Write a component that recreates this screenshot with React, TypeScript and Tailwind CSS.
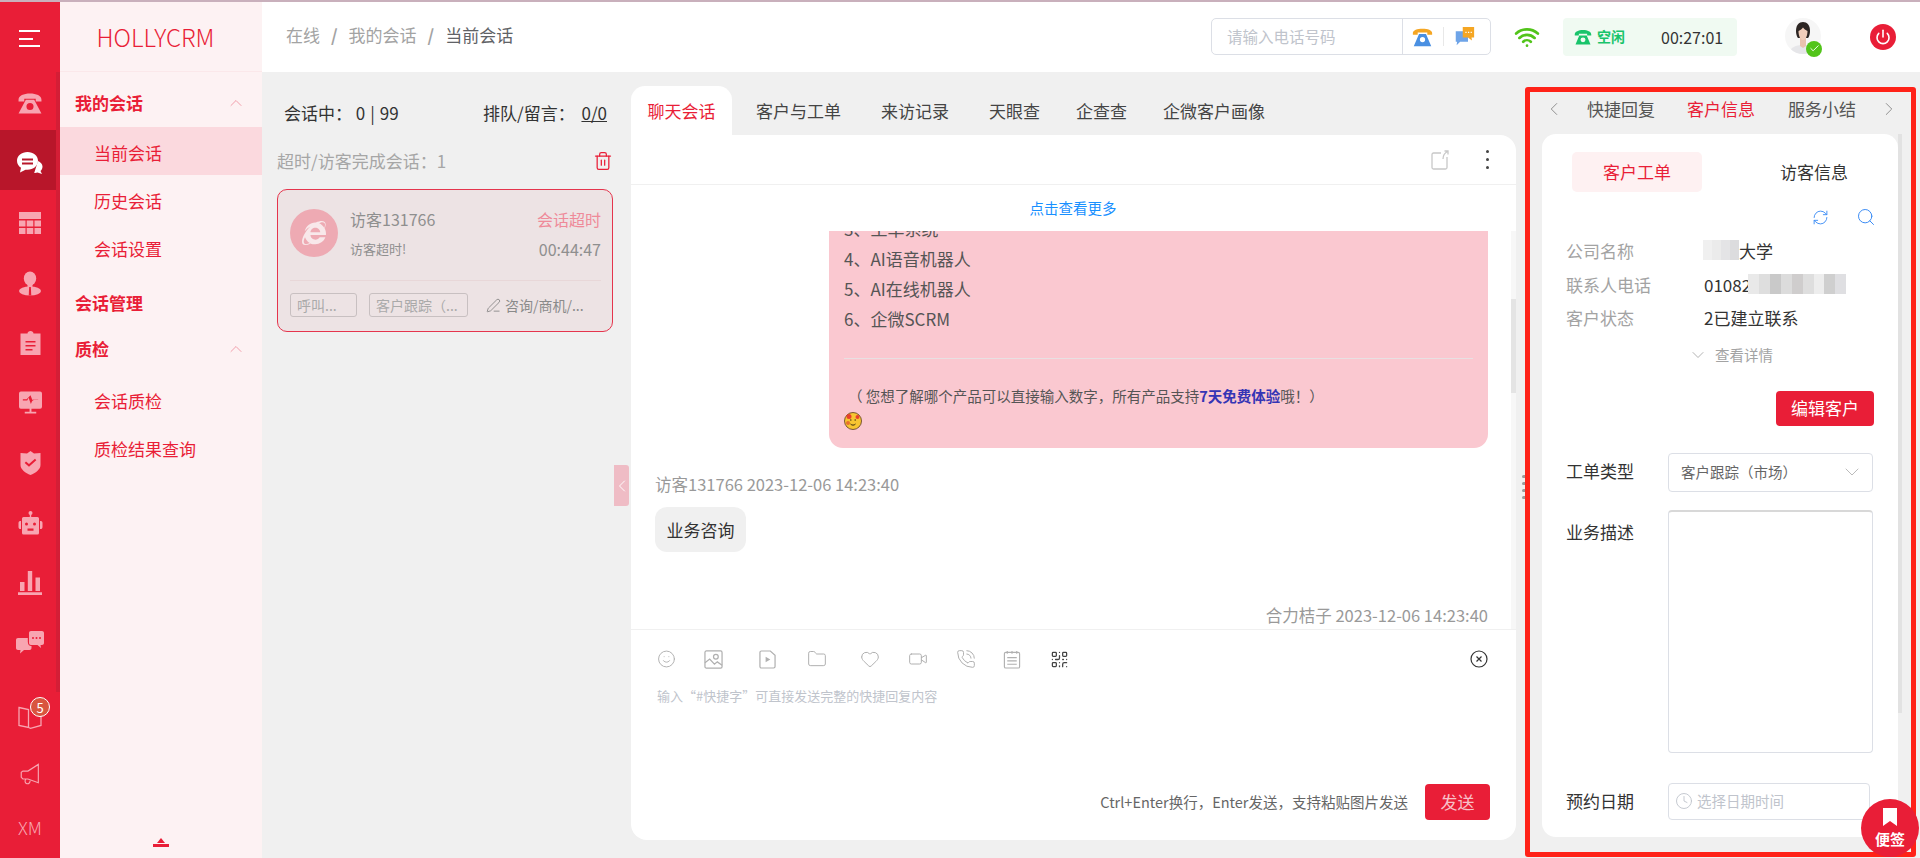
import {
  ChevronDown,
  ChevronLeft,
  ChevronRight,
  ChevronUp,
  Clock,
  Folder,
  Heart,
  PenLine,
  PhoneCall,
  QrCode,
  RefreshCw,
  Search,
  Smile,
  Trash2,
  Video,
  Wifi,
  Power,
  Check,
} from "lucide-react";
import { FaInternetExplorer } from "react-icons/fa";

const RotaryPhone = ({ className }: { className?: string }) => (
  <svg viewBox="0 0 24 24" className={className} fill="currentColor">
    <path d="M1 8.500C1 4.500 6 2.500 12 2.500s11 2 11 6v1.500h-5.500V7.500h-11V10H1z" />
    <path
      fillRule="evenodd"
      d="M8 8.500h8l7 13H1zM12 11.500a3.400 3.400 0 1 0 0 6.800 3.400 3.400 0 0 0 0-6.800z"
    />
  </svg>
);

const ChatActive = ({ className }: { className?: string }) => (
  <svg viewBox="0 0 28 24" className={className} fill="currentColor">
    <path d="M22 10c2.500 1 4.500 3 4.500 5.500 0 2-1 3.500-2 4.500l1.500 3-4.500-1.500c-1 .4-2.200.5-3.300.4z" />
    <path
      fillRule="evenodd"
      d="M11.500 1C5.700 1 1 4.800 1 9.800c0 3 1.600 5.400 4 7L4 21.500l5.500-2.800c.6.1 1.300.1 2 .1 5.800 0 10.500-4 10.500-9S17.300 1 11.500 1zM6 7.500h11v2H6zM6 11.500h11v2H6z"
    />
  </svg>
);

const GridIcon = ({ className }: { className?: string }) => (
  <svg viewBox="0 0 22 22" className={className} fill="currentColor">
    <path d="M0 0h22v7H0zM0 8.500h6.500v6H0zM7.700 8.500h6.600v6H7.700zM15.500 8.500H22v6h-6.500zM0 16h6.500v6H0zM7.700 16h6.600v6H7.700zM15.500 16H22v6h-6.500z" />
  </svg>
);

const PersonIcon = ({ className }: { className?: string }) => (
  <svg viewBox="0 0 22 24" className={className} fill="currentColor">
    <ellipse cx="11" cy="7" rx="6.200" ry="7" />
    <path d="M8.500 12h5v4h-5z" />
    <ellipse cx="11" cy="19.500" rx="11" ry="4.500" />
    <path d="M10.200 15.500h1.600l.5 8.500h-2.600z" fill="#e91e37" />
  </svg>
);

const ClipboardIcon = ({ className }: { className?: string }) => (
  <svg viewBox="0 0 20 24" className={className} fill="currentColor">
    <path
      fillRule="evenodd"
      d="M7 2.500C7 1 8.300 0 10 0s3 1 3 2.500h7V24H0V2.500zM5 10v1.500h10V10zM5 14v1.500h10V14zM5 18v1.500h7V18z"
    />
  </svg>
);

const MonitorIcon = ({ className }: { className?: string }) => (
  <svg viewBox="0 0 24 24" className={className} fill="currentColor">
    <path
      fillRule="evenodd"
      d="M2 0h20a2 2 0 0 1 2 2v14a2 2 0 0 1-2 2h-9v3h5v2H6v-2h5v-3H2a2 2 0 0 1-2-2V2a2 2 0 0 1 2-2zM4 8v1.400h4.600l1.400-3 2.400 6.600 2-4.600h5.600V8h-4.600l-1 2.200-2.400-6.400L8 8z"
    />
  </svg>
);

const ShieldIcon = ({ className }: { className?: string }) => (
  <svg viewBox="0 0 20 24" className={className} fill="currentColor">
    <path
      fillRule="evenodd"
      d="M10 0l3.500 2.500L20 2v12c0 4.500-5 8-10 10C5 22 0 18.500 0 14V2l6.500.5zM5.500 10.500L4.200 12l4.300 3.800 7.300-6.600-1.300-1.400-6 5.300z"
    />
  </svg>
);

const RobotIcon = ({ className }: { className?: string }) => (
  <svg viewBox="0 0 24 24" className={className} fill="currentColor">
    <circle cx="12" cy="2" r="2" />
    <path d="M11.300 3h1.400v4h-1.400z" />
    <path
      fillRule="evenodd"
      d="M5 6h14a1.500 1.500 0 0 1 1.500 1.500V22a1.500 1.500 0 0 1-1.500 1.500H5A1.500 1.500 0 0 1 3.500 22V7.500A1.500 1.500 0 0 1 5 6zM8 11.500a1.500 1.500 0 1 0 0 3 1.500 1.500 0 0 0 0-3zm8 0a1.500 1.500 0 1 0 0 3 1.500 1.500 0 0 0 0-3zM9 17.500v2.200h6v-2.200z"
    />
    <path d="M0 12a2 2 0 0 1 2.500-2v8A2 2 0 0 1 0 16zM24 12a2 2 0 0 0-2.500-2v8a2 2 0 0 0 2.500-2z" />
  </svg>
);

const BarsIcon = ({ className }: { className?: string }) => (
  <svg viewBox="0 0 24 24" className={className} fill="currentColor">
    <path d="M2 11h4.500v9H2zM9.800 0h4.400v20H9.800zM17.500 6.500H22V20h-4.500zM0 21.300h24V24H0z" />
  </svg>
);

const ChatsIcon = ({ className }: { className?: string }) => (
  <svg viewBox="0 0 28 24" className={className} fill="currentColor">
    <path d="M2 7h9.800v3.500c0 3 1.300 4.500 3.700 4.500v2c0 1-.8 2-2 2H8l-4 3.500.5-3.500H2c-1.200 0-2-1-2-2V9c0-1.200.8-2 2-2z" />
    <path
      fillRule="evenodd"
      d="M15 0h11c1.100 0 2 .8 2 2v10c0 1.200-.9 2-2 2h-1.500l.5 3-3.500-3H15c-1.200 0-2-.8-2-2V2c0-1.200.8-2 2-2zm2 6a1 1 0 1 0 0 2 1 1 0 0 0 0-2zm3.500 0a1 1 0 1 0 0 2 1 1 0 0 0 0-2zM24 6a1 1 0 1 0 0 2 1 1 0 0 0 0-2z"
    />
  </svg>
);

const BookIcon = ({ className }: { className?: string }) => (
  <svg viewBox="0 0 24 24" className={className} fill="none" stroke="currentColor" strokeWidth="1.300">
    <path d="M1 2.500l9.500 2v18L1 20.500zM10.500 4.500v18M10.500 22.500l2 .8 10.500-2.800V6" />
  </svg>
);

const MegaphoneIcon = ({ className }: { className?: string }) => (
  <svg viewBox="0 0 24 26" className={className} fill="none" stroke="currentColor" strokeWidth="1.400">
    <path d="M22 1.500v22L9.500 19H3.500L1.500 17v-6l2-1.500h6zM7 19.500a3 3 0 1 0 5 1.500" />
  </svg>
);

const LinkShare = () => (
  <svg viewBox="0 0 18 20" className="h-[20px] w-[18px]" fill="none" stroke="#c8c8c8" strokeWidth="1.300">
    <path d="M10 3H2.500A1.500 1.500 0 0 0 1 4.500v13A1.500 1.500 0 0 0 2.500 19h12a1.500 1.500 0 0 0 1.500-1.500V7M12 9c0-3 1.500-6 4.500-7.500M13.500 1h3.500v3.500" />
  </svg>
);

const ImageOutline = () => (
  <svg viewBox="0 0 20 20" className="h-[19px] w-[19px]" fill="none" stroke="#b0b0b0" strokeWidth="1.300">
    <rect x="1" y="1" width="18" height="18" rx="1.500" />
    <circle cx="12.500" cy="7" r="2.500" />
    <path d="M1 13.500l5-4 5 5.500 3-2.500 5 3.500" />
  </svg>
);

const FilePlay = () => (
  <svg viewBox="0 0 18 20" className="h-[19px] w-[17px]" fill="none" stroke="#b0b0b0" strokeWidth="1.300">
    <path d="M2.500 1H12l5 4.500v12a1.500 1.500 0 0 1-1.500 1.500h-13A1.500 1.500 0 0 1 1 17.500v-15A1.500 1.500 0 0 1 2.500 1z" />
    <path d="M7 7l5 3-5 3z" fill="#b0b0b0" stroke="none" />
  </svg>
);

const Notepad = () => (
  <svg viewBox="0 0 18 20" className="h-[19px] w-[18px]" fill="none" stroke="#b0b0b0" strokeWidth="1.200">
    <rect x="1" y="2.500" width="16" height="16.500" rx="1.500" />
    <path d="M4 1v3M9 1v3M14 1v3M4 8h10M4 11.500h10M4 15h10" />
  </svg>
);

const Emoji = () => (
  <svg viewBox="0 0 18 18" className="h-[18px] w-[18px]">
    <circle cx="9" cy="9" r="8.500" fill="#f7c531" stroke="#5a3a1a" strokeWidth="0.800" />
    <circle cx="5" cy="4.500" r="2.500" fill="#e8402c" />
    <circle cx="13.500" cy="5" r="2" fill="#e8402c" />
    <circle cx="4" cy="11" r="2" fill="#e8702c" />
    <path d="M6 8h1.500M10.500 8H12" stroke="#3a2a10" strokeWidth="1" />
    <path d="M6.500 12c1.500 1.500 3.500 1.500 5 0" stroke="#3a2a10" strokeWidth="1" fill="none" />
  </svg>
);

const DeskPhone = () => (
  <svg viewBox="0 0 24 24" className="h-[21px] w-[21px]">
    <path d="M1 8C1 4.500 6 3 12 3s11 1.500 11 5v2h-5.500V7.500h-11V10H1z" fill="#f5a623" />
    <path
      fillRule="evenodd"
      d="M8 9h8l6 14H2zM12 12.500a3 3 0 1 0 0 6 3 3 0 0 0 0-6z"
      fill="#4a90e2"
    />
  </svg>
);

const CallMessage = () => (
  <svg viewBox="0 0 24 24" className="h-[21px] w-[21px]">
    <path d="M2 6h14v12H7l-4 4 .5-4H2z" fill="#6ea4e8" />
    <path d="M10 1h13v12h-3l.5 3.500L16 13h-6z" fill="#f5a623" />
    <path d="M13 6.500h1.400V8H13zM16 6.500h1.400V8H16zM19 6.500h1.400V8H19z" fill="#fff" />
  </svg>
);

const Avatar = () => (
  <svg viewBox="0 0 36 36" className="h-[36px] w-[36px]">
    <clipPath id="face">
      <circle cx="18" cy="18" r="18" />
    </clipPath>
    <g clipPath="url(#face)">
      <rect width="36" height="36" fill="#f6f6f6" />
      <path d="M4 36c1-7 7-9 14-9s13 2 14 9z" fill="#e6e6e9" />
      <path d="M15 20h6v8l-3 2-3-2z" fill="#e9c2ae" />
      <path d="M11 13c0-6 3-9 7-9s7 3 7 9c0 3-1 6-2 7H13c-1-1-2-4-2-7z" fill="#2c2523" />
      <path d="M13.500 13c2-1 3.500-2 4.500-3.500 1 1.500 2.500 2.500 4.500 3.500 0 5-2 9-4.500 9s-4.500-4-4.500-9z" fill="#f0cdba" />
    </g>
  </svg>
);

const railIcons = [
  { Icon: RotaryPhone, size: "h-[25px] w-[26px]" },
  { Icon: ChatActive, size: "h-[24px] w-[28px]", active: true },
  { Icon: GridIcon, size: "h-[22px] w-[22px]" },
  { Icon: PersonIcon, size: "h-[25px] w-[22px]" },
  { Icon: ClipboardIcon, size: "h-[24px] w-[21px]" },
  { Icon: MonitorIcon, size: "h-[24px] w-[23px]" },
  { Icon: ShieldIcon, size: "h-[24px] w-[21px]" },
  { Icon: RobotIcon, size: "h-[24px] w-[27px]" },
  { Icon: BarsIcon, size: "h-[24px] w-[24px]" },
  { Icon: ChatsIcon, size: "h-[24px] w-[28px]" },
];

const Rail = () => (
  <div className="relative flex h-full w-[60px] shrink-0 flex-col bg-[#e91e37]">
    <div className="flex h-[68px] w-[56px] flex-col justify-center gap-[5.500px] pl-[19px] pt-[5px]">
      <div className="h-[2px] w-[21px] bg-white" />
      <div className="h-[2px] w-[14px] bg-white" />
      <div className="h-[2px] w-[21px] bg-white" />
    </div>
    {railIcons.map(({ Icon, size, active }, i) => (
      <div
        key={i}
        className={
          active
            ? "flex h-[60px] w-[56px] items-center justify-center bg-[#b8162a] pl-[4px] pt-[6px] text-white"
            : "flex h-[60px] w-[56px] items-center justify-center pl-[4px] pt-[6px] text-[#f8a5b1]"
        }
      >
        <Icon className={size} />
      </div>
    ))}
    <div className="relative ml-[18px] mt-[35px] h-[24px] w-[24px] text-[#f8a5b1]">
      <BookIcon className="h-[24px] w-[24px]" />
      <span className="absolute -right-[8px] -top-[8px] flex h-[20px] w-[20px] items-center justify-center rounded-full border border-white bg-[#d9553f] text-[13px] leading-none text-white">
        5
      </span>
    </div>
    <div className="mt-[34px] flex h-[22px] w-[60px] items-center justify-center text-[#f8a5b1]">
      <MegaphoneIcon className="h-[22px] w-[20px]" />
    </div>
    <div className="mt-[30px] w-[60px] text-center text-[18px] font-light leading-[24px] text-[#f8a5b1]">XM</div>
    <div className="absolute left-[56px] top-[70px] h-[620px] w-[4px] bg-[#d41e36]" />
  </div>
);

const SideItem = ({ label, active }: { label: string; active?: boolean }) => (
  <div
    className={
      active
        ? "flex h-[48px] items-center bg-[#fbd9de] pl-[34px] pt-[4px] text-[17px] text-[#e91e37]"
        : "flex h-[48px] items-center pl-[34px] pt-[4px] text-[17px] text-[#e91e37]"
    }
  >
    {label}
  </div>
);

const SideGroup = ({ label, caret }: { label: string; caret?: boolean }) => (
  <div className="flex h-[46px] items-center justify-between pb-[3px] pl-[15px] pr-[16px] text-[17px] font-bold text-[#e91e37]">
    <span>{label}</span>
    {caret && <ChevronUp size={20} strokeWidth={1} className="text-[#ef8e9c]" />}
  </div>
);

const Sidebar = () => (
  <div className="flex h-full w-[202px] shrink-0 flex-col bg-[#fdf2f3]">
    <div className="flex h-[70px] items-center justify-center border-b border-[#fbe8ea] pr-[11px] text-[24px] font-light text-[#e91e37]">
      HOLLYCRM
    </div>
    <div className="pt-[9px]">
      <SideGroup label="我的会话" caret />
      <SideItem label="当前会话" active />
      <SideItem label="历史会话" />
      <SideItem label="会话设置" />
      <div className="h-[10px]" />
      <SideGroup label="会话管理" />
      <SideGroup label="质检" caret />
      <div className="h-[2px]" />
      <SideItem label="会话质检" />
      <SideItem label="质检结果查询" />
    </div>
    <div className="mt-auto flex flex-col items-center pb-[11px]">
      <div className="h-0 w-0 border-x-[4px] border-b-[5px] border-x-transparent border-b-[#e91e37]" />
      <div className="mt-[1px] h-[3px] w-[16px] bg-[#e91e37]" />
    </div>
  </div>
);

const Header = () => (
  <div className="flex h-[70px] shrink-0 items-center bg-white pb-[1px]">
    <div className="flex items-center pb-[4px] pl-[24px] text-[17px] text-[#a3a3a3]">
      <span>在线</span>
      <span className="mx-[11px] font-bold">/</span>
      <span>我的会话</span>
      <span className="mx-[11px] font-bold">/</span>
      <span className="text-[#606266]">当前会话</span>
    </div>
    <div className="ml-auto flex h-[37px] w-[280px] rounded-[5px] border border-[#dcdfe6]">
      <div className="flex w-[191px] items-center border-r border-[#dcdfe6] pl-[15px] text-[15.500px] text-[#c0c4cc]">
        请输入电话号码
      </div>
      <div className="flex flex-1 items-center justify-start gap-[10px] pl-[9px]">
        <DeskPhone />
        <div className="h-[19px] w-px bg-[#e8e8e8]" />
        <CallMessage />
      </div>
    </div>
    <Wifi size={26} strokeWidth={2.500} className="ml-[23px] text-[#52c41a]" />
    <div className="ml-[23px] flex h-[38px] w-[174px] items-center rounded-[4px] bg-[#f0faf2] pl-[11px]">
      <svg viewBox="0 0 24 24" className="h-[18px] w-[18px] text-[#19c46b]" fill="currentColor">
        <path d="M1 8.500C1 4.500 6 2.500 12 2.500s11 2 11 6v1.500h-5.500V7.500h-11V10H1z" />
        <path fillRule="evenodd" d="M7 10h10l5 12H2zM12 12.500a3.300 3.300 0 1 0 0 6.600 3.300 3.300 0 0 0 0-6.600z" />
      </svg>
      <span className="ml-[5px] text-[14px] font-bold text-[#19c46b]">空闲</span>
      <span className="ml-[36px] text-[16px] text-[#333]">00:27:01</span>
    </div>
    <div className="relative ml-[48px] h-[36px] w-[36px] -translate-y-[1px]">
      <Avatar />
      <div className="absolute -bottom-[3px] -right-[1px] flex h-[16px] w-[16px] items-center justify-center rounded-full bg-[#52c41a]">
        <Check size={11} strokeWidth={2} className="text-white" />
      </div>
    </div>
    <div className="ml-[49px] mr-[24px] flex h-[26px] w-[26px] items-center justify-center rounded-full bg-[#e91e37]">
      <Power size={16} strokeWidth={2.400} className="text-white" />
    </div>
  </div>
);

const ConversationList = () => (
  <div className="relative w-[369px] shrink-0 pl-[15px] pr-[18px]">
    <div className="mt-[29px] flex h-[24px] items-center justify-between pl-[7px] pr-[6px] text-[17px] text-[#333]">
      <span>
        会话中：&nbsp;0<span className="mx-[5px]">|</span>99
      </span>
      <span>
        排队/留言：&nbsp;<span className="ml-[3px] underline">0/0</span>
      </span>
    </div>
    <div className="mt-[24px] flex h-[24px] items-center justify-between text-[17px] text-[#a6a6a6]">
      <span>超时/访客完成会话：1</span>
      <Trash2 size={20} strokeWidth={1.500} className="text-[#e91e37]" />
    </div>
    <div className="mt-[16px] h-[143px] w-[336px] rounded-[10px] border border-[#e5354d] bg-[#ede3e4] pl-[12px] pr-[11px]">
      <div className="flex h-[91px] items-center border-b border-[#e8d7d8]">
        <div className="mb-[5px] flex h-[48px] w-[48px] shrink-0 items-center justify-center rounded-full bg-[#eeaab3]">
          <FaInternetExplorer size={24} className="text-[#f8e8ea]" />
        </div>
        <div className="mb-[2px] ml-[12px] flex-1">
          <div className="flex items-center justify-between text-[16px]">
            <span className="text-[#8f8f8f]">访客131766</span>
            <span className="text-[#ef8a99]">会话超时</span>
          </div>
          <div className="mt-[6px] flex items-center justify-between">
            <span className="text-[13px] text-[#8f8f8f]">访客超时!</span>
            <span className="text-[16px] text-[#8f8f8f]">00:44:47</span>
          </div>
        </div>
      </div>
      <div className="flex items-center pt-[12px] text-[14px]">
        <div className="flex h-[24px] w-[67px] items-center rounded-[3px] border border-[#c8c0c1] pl-[6px] text-[#aaa]">
          呼叫...
        </div>
        <div className="ml-[12px] flex h-[24px] w-[99px] items-center rounded-[3px] border border-[#c8c0c1] pl-[6px] text-[#aaa]">
          客户跟踪（...
        </div>
        <PenLine size={15} strokeWidth={1.200} className="ml-[18px] text-[#777]" />
        <span className="ml-[4px] text-[#8a8a8a]">咨询/商机/...</span>
      </div>
    </div>
    <div className="absolute right-[2px] top-[393px] flex h-[41px] w-[15px] items-center justify-center rounded-r-[3px] bg-[#efbcc5]">
      <ChevronLeft size={20} strokeWidth={1.100} className="shrink-0 text-white" />
    </div>
  </div>
);

const chatTabs = ["客户与工单", "来访记录", "天眼查", "企查查", "企微客户画像"];

const ChatPanel = () => (
  <div className="flex w-[885px] shrink-0 flex-col">
    <div className="mt-[14px] flex h-[49px] text-[17px] text-[#444]">
      <div className="flex h-[49px] w-[101px] items-center justify-center rounded-t-[14px] bg-white text-[#e91e37]">
        聊天会话
      </div>
      <div className="ml-[24px] flex items-center gap-[40px]">
        {chatTabs.map((t, i) => (
          <span key={t} className={i > 1 ? "-mr-[4px]" : ""}>
            {t}
          </span>
        ))}
      </div>
    </div>
    <div className="flex h-[705px] flex-col rounded-b-[16px] rounded-tr-[16px] bg-white">
      <div className="flex h-[50px] shrink-0 items-center justify-end gap-[37px] border-b border-[#f0f0f0] pr-[27px]">
        <LinkShare />
        <div className="flex flex-col gap-[5px]">
          <div className="h-[3px] w-[3px] rounded-full bg-[#444]" />
          <div className="h-[3px] w-[3px] rounded-full bg-[#444]" />
          <div className="h-[3px] w-[3px] rounded-full bg-[#444]" />
        </div>
      </div>
      <div className="flex h-[46px] shrink-0 items-center justify-center pr-[1px] text-[14.500px] text-[#1890ff]">
        点击查看更多
      </div>
      <div className="relative h-[399px] shrink-0 overflow-hidden border-b border-[#f0f0f0]">
        <div className="absolute right-0 top-0 h-[399px] w-[5px] bg-[#f7f7f7]">
          <div className="mt-[68px] h-[94px] w-[5px] bg-[#e4e4e4]" />
        </div>
        <div className="ml-[198px] mr-[28px] -mt-[17px] h-[234px] rounded-[14px] bg-[#fac8d0] px-[15px] text-[17px] leading-[30px] text-[#555]">
          <div>3、工单系统</div>
          <div>4、AI语音机器人</div>
          <div>5、AI在线机器人</div>
          <div>6、企微SCRM</div>
          <div className="mt-[24px] h-px bg-[#e8e0e2]" />
          <div className="mt-[25px] whitespace-nowrap pl-[4px] text-[14.500px] leading-[24px]">
            （ 您想了解哪个产品可以直接输入数字，所有产品支持
            <b className="text-[#3535b5]">7天免费体验</b>哦！）
          </div>
          <div className="mt-[4px]">
            <Emoji />
          </div>
        </div>
        <div className="ml-[24px] mt-[25px] text-[16.500px] leading-[22px] text-[#999]">访客131766 2023-12-06 14:23:40</div>
        <div className="ml-[24px] mt-[12px] flex h-[45px] w-[91px] items-center justify-center rounded-[12px] bg-[#f0f0f0] text-[17px] text-[#333]">
          业务咨询
        </div>
        <div className="mr-[28px] mt-[52px] text-right text-[16.500px] leading-[22px] text-[#999]">
          合力桔子 2023-12-06 14:23:40
        </div>
      </div>
      <div className="flex h-[58px] shrink-0 items-center pl-[26px] pr-[28px]">
        <div className="flex w-[19px] justify-center">
          <Smile size={20} strokeWidth={1.200} className="text-[#b0b0b0]" />
        </div>
        <div className="ml-[28px]">
          <ImageOutline />
        </div>
        <div className="ml-[36px]">
          <FilePlay />
        </div>
        <Folder size={20} strokeWidth={1.200} className="ml-[31px] text-[#b0b0b0]" />
        <Heart size={20} strokeWidth={1.200} className="ml-[33px] text-[#b0b0b0]" />
        <Video size={20} strokeWidth={1.200} className="ml-[28px] text-[#b0b0b0]" />
        <PhoneCall size={20} strokeWidth={1.200} className="ml-[28px] text-[#b0b0b0]" />
        <div className="ml-[27px]">
          <Notepad />
        </div>
        <QrCode size={19} strokeWidth={1.600} className="ml-[29px] text-[#444]" />
        <svg viewBox="0 0 18 18" className="ml-auto h-[18px] w-[18px]" fill="none" stroke="#333" strokeWidth="1.200">
          <circle cx="9" cy="9" r="8" />
          <path d="M6.500 6.500l5 5M11.500 6.500l-5 5" />
        </svg>
      </div>
      <div className="-mt-[2px] pl-[26px] text-[13px] leading-[20px] text-[#c0c4cc]">输入“#快捷字”可直接发送完整的快捷回复内容</div>
      <div className="mt-[78px] flex items-center justify-end pr-[26px]">
        <span className="text-[14.500px] text-[#666]">Ctrl+Enter换行，Enter发送，支持粘贴图片发送</span>
        <div className="ml-[17px] flex h-[36px] w-[65px] items-center justify-center rounded-[4px] bg-[#e91e37] text-[17px] text-[#f8c0c8]">
          发送
        </div>
      </div>
    </div>
  </div>
);

const mosaicA = ["bg-[#f0f0f0]", "bg-[#ebebeb]", "bg-[#e4e4e6]", "bg-[#dcdcde]"];
const mosaicB = [
  "bg-[#e9e9e9]",
  "bg-[#dedede]",
  "bg-[#c9c9c9]",
  "bg-[#dcdcdc]",
  "bg-[#cfcdcd]",
  "bg-[#dedede]",
  "bg-[#ededed]",
  "bg-[#cfcfcf]",
  "bg-[#dfdfe2]",
];

const Info = ({ label, children }: { label: string; children: React.ReactNode }) => (
  <div className="flex h-[33.500px] items-center pl-[24px] text-[17px]">
    <span className="w-[138px] text-[#a3a3a3]">{label}</span>
    <div className="flex items-center text-[#333]">{children}</div>
  </div>
);

const CustomerPanel = () => (
  <div className="relative flex-1">
    <div className="flex h-[62px] items-center pt-[12px] text-[17px] text-[#555]">
      <ChevronLeft size={22} strokeWidth={1} className="ml-[27px] text-[#888]" />
      <span className="ml-[22px]">快捷回复</span>
      <span className="ml-[32px] text-[#e91e37]">客户信息</span>
      <span className="ml-[33px]">服务小结</span>
      <ChevronRight size={22} strokeWidth={1} className="ml-[22px] text-[#888]" />
    </div>
    <div className="ml-[26px] flex">
      <div className="h-[703px] w-[356px] rounded-[14px] bg-white pt-[18px]">
        <div className="flex h-[40px] items-center pl-[30px] text-[17px]">
          <div className="flex h-[40px] w-[130px] items-center justify-center rounded-[5px] bg-[#fef1f2] text-[#e91e37]">
            客户工单
          </div>
          <span className="ml-[78px] text-[#333]">访客信息</span>
        </div>
        <div className="mt-[15px] flex h-[20px] items-center justify-end gap-[27px] pr-[22px] text-[#3b8cf5]">
          <RefreshCw size={17} strokeWidth={1.300} />
          <Search size={20} strokeWidth={1.200} />
        </div>
        <div className="mt-[7px]">
          <Info label="公司名称">
            <div className="-ml-px -mt-[2px] flex h-[20px] w-[36px]">
              {mosaicA.map((c) => (
                <div key={c} className={"h-full flex-1 " + c} />
              ))}
            </div>
            <span>大学</span>
          </Info>
          <Info label="联系人电话">
            <span>01082</span>
            <div className="-ml-[3px] flex h-[20px] w-[98px]">
              {mosaicB.map((c) => (
                <div key={c} className={"h-full flex-1 " + c} />
              ))}
            </div>
          </Info>
          <Info label="客户状态">
            <span>2已建立联系</span>
          </Info>
        </div>
        <div className="mt-[3px] flex h-[34px] items-center pl-[146px] text-[14.500px] text-[#a3a3a3]">
          <ChevronDown size={20} strokeWidth={1} />
          <span className="ml-[7px]">查看详情</span>
        </div>
        <div className="mt-[19px] flex justify-end pr-[24px]">
          <div className="flex h-[35px] w-[98px] items-center justify-center rounded-[4px] bg-[#e91e37] text-[17px] text-white">
            编辑客户
          </div>
        </div>
        <div className="mt-[27px] flex items-center pl-[24px]">
          <span className="w-[102px] pb-[2px] text-[17px] text-[#333]">工单类型</span>
          <div className="flex h-[39px] w-[205px] items-center justify-between rounded-[4px] border border-[#dcdfe6] pl-[12px] pr-[8px] text-[14.500px] text-[#666]">
            <span>客户跟踪（市场）</span>
            <ChevronDown size={24} strokeWidth={0.800} className="text-[#aaa]" />
          </div>
        </div>
        <div className="mt-[18px] flex pl-[24px]">
          <span className="w-[102px] pt-[10px] text-[17px] leading-[24px] text-[#333]">业务描述</span>
          <div className="h-[243px] w-[205px] rounded-[4px] border border-t-2 border-[#dcdfe6] border-t-[#d8d8d8]" />
        </div>
        <div className="mt-[30px] flex items-center pl-[24px]">
          <span className="w-[102px] text-[17px] text-[#333]">预约日期</span>
          <div className="flex h-[37px] w-[202px] items-center rounded-[4px] border border-[#dcdfe6] pl-[6px] text-[14.500px] text-[#c0c4cc]">
            <Clock size={18} strokeWidth={1.200} />
            <span className="ml-[4px]">选择日期时间</span>
          </div>
        </div>
      </div>
      <div className="h-[579px] w-[4px] bg-[#e2e2e2]" />
    </div>
    <div className="absolute left-[6px] top-[403px] flex flex-col gap-[4px]">
      <div className="h-[3px] w-[6px] rounded-full bg-[#9a9a9a]" />
      <div className="h-[3px] w-[6px] rounded-full bg-[#9a9a9a]" />
      <div className="h-[3px] w-[6px] rounded-full bg-[#9a9a9a]" />
      <div className="h-[3px] w-[6px] rounded-full bg-[#9a9a9a]" />
    </div>
  </div>
);

const App = () => (
  <div className="relative h-[858px] w-[1920px] overflow-hidden bg-[#f0f0f0] font-['Noto_Sans_CJK_SC','Noto_Sans',sans-serif]">
    <div className="h-[2px] bg-[#c9b0bc]" />
    <div className="flex h-[856px]">
      <Rail />
      <Sidebar />
      <div className="flex min-w-0 flex-1 flex-col">
        <Header />
        <div className="flex flex-1">
          <ConversationList />
          <ChatPanel />
          <CustomerPanel />
        </div>
      </div>
    </div>
    <div className="absolute left-[1525px] top-[87px] h-[770px] w-[391px] rounded-[3px] border-[5px] border-[#ff2218]" />
    <div className="absolute left-[1861px] top-[799px] flex h-[58px] w-[58px] flex-col items-center rounded-full bg-[#e91e37] pt-[9px] text-white">
      <svg viewBox="0 0 14 18" className="h-[18px] w-[14px]" fill="currentColor">
        <path d="M0 0h14v18l-7-5-7 5z" />
      </svg>
      <span className="mt-[3px] text-[15px] font-bold leading-[20px]">便签</span>
    </div>
  </div>
);

export default App;
